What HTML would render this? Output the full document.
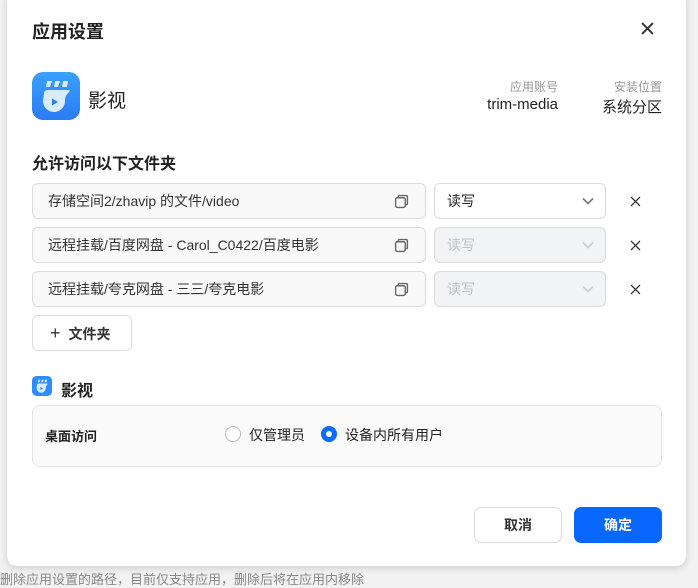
<!DOCTYPE html>
<html><head><meta charset="utf-8"><style>
*{box-sizing:border-box;margin:0;padding:0}
body{width:698px;height:580px;overflow:hidden;background:#f2f2f3;font-family:"Liberation Sans","Noto Sans CJK SC",sans-serif;position:relative;color:#222}
.dlg{position:absolute;left:7px;top:-10px;width:679px;height:576px;background:#fff;border-radius:10px;box-shadow:0 2px 8px rgba(0,0,0,.15)}
.abs{position:absolute}
.field{position:absolute;left:32px;width:394px;height:36px;border:1px solid #dcdcdf;border-radius:6px;background:#f9f9fa;font-size:14px;line-height:34px;padding-left:15px;color:#333}
.sel{position:absolute;left:434px;width:172px;height:36px;border:1px solid #dcdcdf;border-radius:6px;background:#fff;font-size:14px;line-height:34px;padding-left:12px;color:#222}
.sel.dis{background:#f2f3f5;color:#c0c0c4}
</style></head><body>
<div class="abs" style="left:0;top:569px;font-size:13px;color:#888">删除应用设置的路径，目前仅支持应用，删除后将在应用内移除</div>
<div class="dlg"></div>
<div class="abs" style="left:32px;top:18px;font-size:18px;font-weight:bold">应用设置</div>
<svg class="abs" style="left:641px;top:22px" width="13" height="13" viewBox="0 0 12 12"><path d="M1 1L11 11M11 1L1 11" stroke="#333" stroke-width="1.8"/></svg>
<svg class="abs" style="left:32px;top:72px" width="48" height="48" viewBox="0 0 48 48"><defs><linearGradient id="g" x1="0" y1="0" x2="0" y2="1"><stop offset="0" stop-color="#3aa0ff"/><stop offset="1" stop-color="#2a7cf5"/></linearGradient></defs><rect width="48" height="48" rx="11" fill="url(#g)"/><path d="M15 9h5l-2 6h-4zM23 9h5l-2 6h-4zM31 9h5l-1 6h-5z" fill="#d8ecff"/><path d="M12 21c0-2 2-3 5-3h20c1 0 1 1 0 2-3 3-4 5-4 9 0 6-5 11-11 11s-11-5-11-11c0-3 1-6 1-8z" fill="#d8ecff"/><path d="M20 26.5l6 3.5-6 3.5z" fill="#2a80f5"/></svg>
<div class="abs" style="left:88px;top:86px;font-size:19px">影视</div>
<div class="abs" style="right:140px;top:78px;font-size:12px;color:#999;text-align:right">应用账号</div>
<div class="abs" style="right:140px;top:96px;font-size:15px;text-align:right">trim-media</div>
<div class="abs" style="right:36px;top:78px;font-size:12px;color:#999;text-align:right">安装位置</div>
<div class="abs" style="right:36px;top:96px;font-size:15px;text-align:right">系统分区</div>
<div class="abs" style="left:32px;top:150px;font-size:16px;font-weight:bold">允许访问以下文件夹</div>

<div class="field" style="top:183px">存储空间2/zhavip 的文件/video</div>
<div class="field" style="top:227px">远程挂载/百度网盘 - Carol_C0422/百度电影</div>
<div class="field" style="top:271px">远程挂载/夸克网盘 - 三三/夸克电影</div>
<svg class="abs" style="left:394px;top:194px" width="15" height="15" viewBox="0 0 14 14"><rect x="1.5" y="3.5" width="9" height="9" rx="1.5" fill="none" stroke="#666" stroke-width="1.3"/><path d="M4 3.5V2.5a1 1 0 0 1 1-1h6.5a1 1 0 0 1 1 1V9a1 1 0 0 1-1 1h-1" fill="none" stroke="#666" stroke-width="1.3"/></svg>
<svg class="abs" style="left:394px;top:238px" width="15" height="15" viewBox="0 0 14 14"><rect x="1.5" y="3.5" width="9" height="9" rx="1.5" fill="none" stroke="#666" stroke-width="1.3"/><path d="M4 3.5V2.5a1 1 0 0 1 1-1h6.5a1 1 0 0 1 1 1V9a1 1 0 0 1-1 1h-1" fill="none" stroke="#666" stroke-width="1.3"/></svg>
<svg class="abs" style="left:394px;top:282px" width="15" height="15" viewBox="0 0 14 14"><rect x="1.5" y="3.5" width="9" height="9" rx="1.5" fill="none" stroke="#666" stroke-width="1.3"/><path d="M4 3.5V2.5a1 1 0 0 1 1-1h6.5a1 1 0 0 1 1 1V9a1 1 0 0 1-1 1h-1" fill="none" stroke="#666" stroke-width="1.3"/></svg>

<div class="sel" style="top:183px">读写</div>
<div class="sel dis" style="top:227px">读写</div>
<div class="sel dis" style="top:271px">读写</div>
<svg class="abs" style="left:582px;top:197px" width="12" height="8" viewBox="0 0 12 8"><path d="M1 1.5l5 5 5-5" fill="none" stroke="#777" stroke-width="1.6"/></svg>
<svg class="abs" style="left:582px;top:241px" width="12" height="8" viewBox="0 0 12 8"><path d="M1 1.5l5 5 5-5" fill="none" stroke="#ccc" stroke-width="1.6"/></svg>
<svg class="abs" style="left:582px;top:285px" width="12" height="8" viewBox="0 0 12 8"><path d="M1 1.5l5 5 5-5" fill="none" stroke="#ccc" stroke-width="1.6"/></svg>
<svg class="abs" style="left:630px;top:196px" width="11" height="11" viewBox="0 0 11 11"><path d="M1 1L10 10M10 1L1 10" stroke="#333" stroke-width="1.3"/></svg>
<svg class="abs" style="left:630px;top:240px" width="11" height="11" viewBox="0 0 11 11"><path d="M1 1L10 10M10 1L1 10" stroke="#333" stroke-width="1.3"/></svg>
<svg class="abs" style="left:630px;top:284px" width="11" height="11" viewBox="0 0 11 11"><path d="M1 1L10 10M10 1L1 10" stroke="#333" stroke-width="1.3"/></svg>

<div class="abs" style="left:32px;top:315px;width:100px;height:36px;border:1px solid #dcdcdf;border-radius:6px;font-size:14px;font-weight:bold;line-height:34px;padding-left:17px;color:#333"><span style="font-weight:normal;font-size:18px;margin-right:8px">+</span>文件夹</div>

<svg class="abs" style="left:32px;top:376px" width="20" height="20" viewBox="0 0 48 48"><rect width="48" height="48" rx="11" fill="#2f8cff"/><path d="M15 9h5l-2 6h-4zM23 9h5l-2 6h-4zM31 9h5l-1 6h-5z" fill="#d8ecff"/><path d="M12 21c0-2 2-3 5-3h20c1 0 1 1 0 2-3 3-4 5-4 9 0 6-5 11-11 11s-11-5-11-11c0-3 1-6 1-8z" fill="#d8ecff"/><path d="M20 26.5l6 3.5-6 3.5z" fill="#2a80f5"/></svg>
<div class="abs" style="left:61px;top:377px;font-size:16px;font-weight:bold">影视</div>
<div class="abs" style="left:32px;top:405px;width:630px;height:62px;border:1px solid #e6e6e8;border-radius:8px;background:#fafafa"></div>
<div class="abs" style="left:45px;top:426px;font-size:13px;font-weight:bold">桌面访问</div>
<div class="abs" style="left:225px;top:426px;width:16px;height:16px;border:1px solid #bbb;border-radius:50%;background:#fff"></div>
<div class="abs" style="left:249px;top:425px;font-size:14px">仅管理员</div>
<div class="abs" style="left:321px;top:426px;width:16px;height:16px;border-radius:50%;background:#0b6cff"><div style="position:absolute;left:5px;top:5px;width:6px;height:6px;border-radius:50%;background:#fff"></div></div>
<div class="abs" style="left:345px;top:425px;font-size:14px">设备内所有用户</div>

<div class="abs" style="left:474px;top:507px;width:88px;height:36px;border:1px solid #dcdcdf;border-radius:7px;font-size:14px;font-weight:bold;text-align:center;line-height:34px;color:#333">取消</div>
<div class="abs" style="left:574px;top:507px;width:88px;height:36px;border-radius:7px;background:#0767ff;font-size:14px;font-weight:bold;text-align:center;line-height:36px;color:#fff">确定</div>
</body></html>
